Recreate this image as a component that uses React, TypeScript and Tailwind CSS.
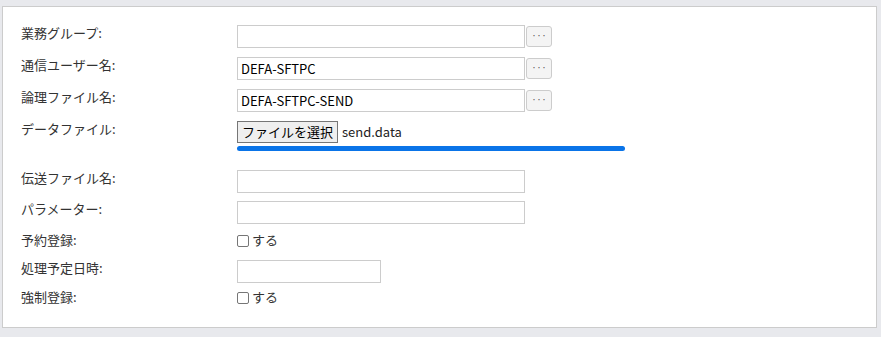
import React from 'react';

const font = { fontFamily: '"Noto Sans CJK JP", "Open Sans", sans-serif' };

const Label: React.FC<{ children: React.ReactNode }> = ({ children }) => (
  <div className="w-[216px] shrink-0 text-[13px] leading-4 text-[#333]">{children}</div>
);

const TextBox: React.FC<{ value?: string; w?: string }> = ({ value = '', w = 'w-[288px]' }) => (
  <input
    type="text"
    readOnly
    value={value}
    className={`${w} h-[23px] border border-[#cccccc] bg-white px-[3px] text-[13px] text-black outline-none`}
  />
);

const DotsButton: React.FC = () => (
  <button className="ml-px mt-px flex h-[21px] w-[26px] items-center justify-center rounded-[3px] border border-[#cccccc] bg-[#f4f4f4] pb-[2px] text-[9px] text-[#555]">
    ···
  </button>
);

const Check: React.FC = () => (
  <label className="flex items-center gap-[3px] text-[13px] leading-4 text-[#333]">
    <span className="mt-px h-[12px] w-[12px] rounded-[2px] border border-[#767676] bg-white" />
    する
  </label>
);

const App: React.FC = () => {
  return (
    <div className="h-[337px] w-[881px] bg-[#e8e9ed] pt-[6px] pl-[2px]" style={font}>
      <div className="h-[322px] w-[875px] border border-[#cccccc] bg-white pl-[18px] pt-[18px]">
        <div className="flex h-[32px] items-start">
          <Label>業務グループ:</Label>
          <TextBox />
          <DotsButton />
        </div>
        <div className="flex h-[32px] items-start">
          <Label>通信ユーザー名:</Label>
          <TextBox value="DEFA-SFTPC" />
          <DotsButton />
        </div>
        <div className="flex h-[32px] items-start">
          <Label>論理ファイル名:</Label>
          <TextBox value="DEFA-SFTPC-SEND" />
          <DotsButton />
        </div>
        <div className="flex h-[49px] items-start">
          <Label>データファイル:</Label>
          <div className="flex flex-col">
            <div className="flex items-center">
              <button className="h-[22px] w-[101px] border border-[#767676] bg-[#efefef] text-[13px] leading-5 text-black">
                ファイルを選択
              </button>
              <span className="ml-[4px] text-[13px] text-[#222]">send.data</span>
            </div>
            <div className="mt-[3px] h-[5px] w-[388px] rounded-full bg-[#0a74e8]" />
          </div>
        </div>
        <div className="flex h-[31px] items-start">
          <Label>伝送ファイル名:</Label>
          <TextBox />
        </div>
        <div className="flex h-[31px] items-start">
          <Label>パラメーター:</Label>
          <TextBox />
        </div>
        <div className="flex h-[28px] items-start">
          <Label>予約登録:</Label>
          <Check />
        </div>
        <div className="flex h-[29px] items-start">
          <Label>処理予定日時:</Label>
          <TextBox w="w-[144px]" />
        </div>
        <div className="flex h-[28px] items-start">
          <Label>強制登録:</Label>
          <Check />
        </div>
      </div>
    </div>
  );
};

export default App;
